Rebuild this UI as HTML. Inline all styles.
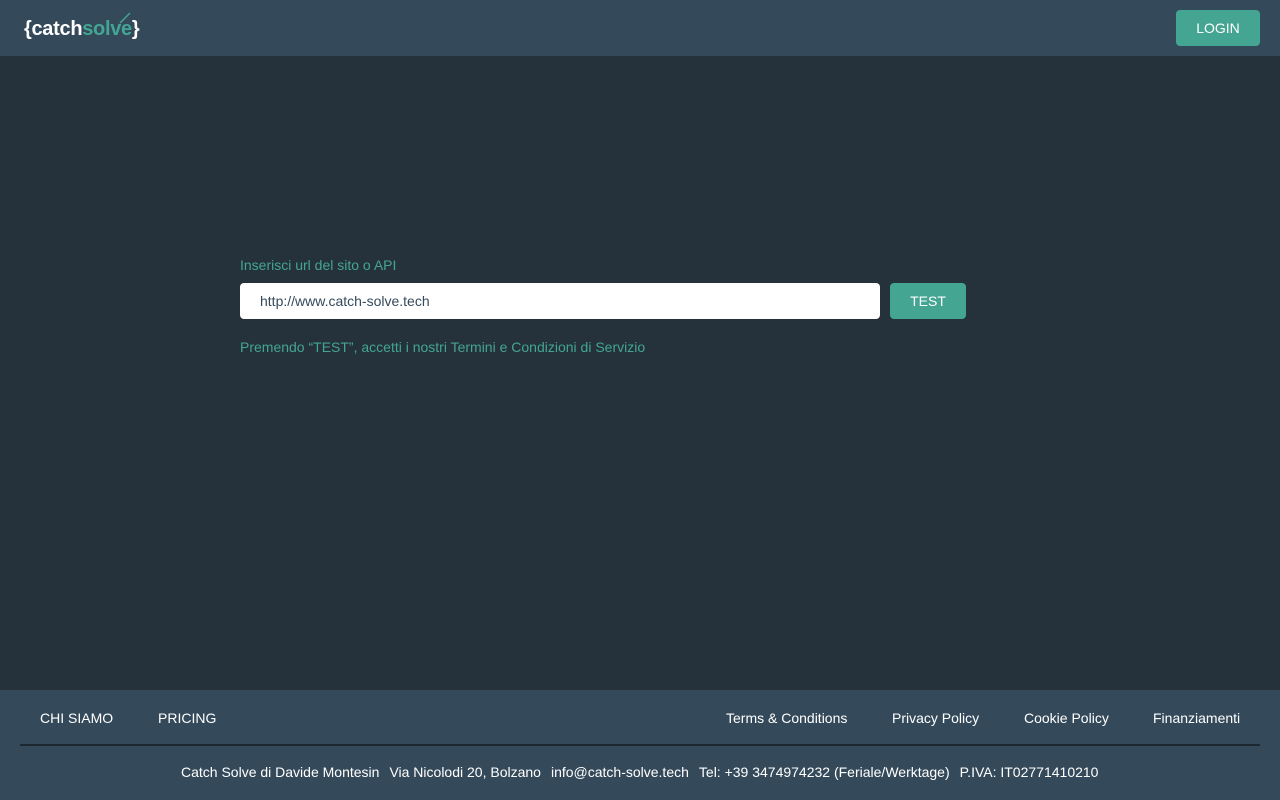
<!DOCTYPE html>
<html><head><meta charset="utf-8"><style>
*{margin:0;padding:0;box-sizing:border-box}
body{width:1280px;height:800px;background:#25323c;font-family:"Liberation Sans",sans-serif;position:relative;overflow:hidden}
.hdr{position:absolute;top:0;left:0;width:1280px;height:56px;background:#34495a}
.logo{position:absolute;left:24px;top:16px;font-family:"Liberation Sans",sans-serif;font-weight:bold;font-size:20px;line-height:26px;color:#fff;letter-spacing:-0.3px}
.logo span{color:#43a592}
.login{position:absolute;right:20px;top:10px;width:84px;height:36px;background:#43a592;border-radius:4px;color:#fff;font-size:14px;text-align:center;line-height:36px}
.lbl{position:absolute;left:240px;top:257px;color:#43a592;font-size:14px}
.inp{position:absolute;left:240px;top:283px;width:640px;height:36px;background:#fff;border-radius:4px;font-size:14px;color:#34495a;padding-left:20px;line-height:36px}
.test{position:absolute;left:890px;top:283px;width:76px;height:36px;background:#43a592;border-radius:4px;color:#fff;font-size:14px;text-align:center;line-height:36px}
.note{position:absolute;left:240px;top:339px;color:#43a592;font-size:14px}
.ftr{position:absolute;top:690px;left:0;width:1280px;height:110px;background:#34495a;color:#fff;font-size:14px}
.ftr a{position:absolute;top:20px}
.line{position:absolute;left:20px;top:54px;width:1240px;height:2px;background:#1c2730}
.info{position:absolute;top:74px;left:181px;white-space:nowrap}
.info i{font-style:normal;margin-right:10px}
</style></head><body>
<div class="hdr"><div class="logo">{catch<span>solve</span>}</div>
<svg style="position:absolute;left:118px;top:12px" width="14" height="12"><path d="M2 11 L12 1" stroke="#43a592" stroke-width="1.5"/></svg>
<div class="login">LOGIN</div></div>
<div class="lbl">Inserisci url del sito o API</div>
<div class="inp">http://www.catch-solve.tech</div>
<div class="test">TEST</div>
<div class="note">Premendo “TEST”, accetti i nostri Termini e Condizioni di Servizio</div>
<div class="ftr">
<a style="left:40px">CHI SIAMO</a><a style="left:158px">PRICING</a>
<a style="left:726px">Terms &amp; Conditions</a><a style="left:892px">Privacy Policy</a><a style="left:1024px">Cookie Policy</a><a style="left:1153px">Finanziamenti</a>
<div class="line"></div>
<div class="info"><i>Catch Solve di Davide Montesin</i><i>Via Nicolodi 20, Bolzano</i><i>info@catch-solve.tech</i><i>Tel: +39 3474974232 (Feriale/Werktage)</i>P.IVA: IT02771410210</div>
</div>
</body></html>
